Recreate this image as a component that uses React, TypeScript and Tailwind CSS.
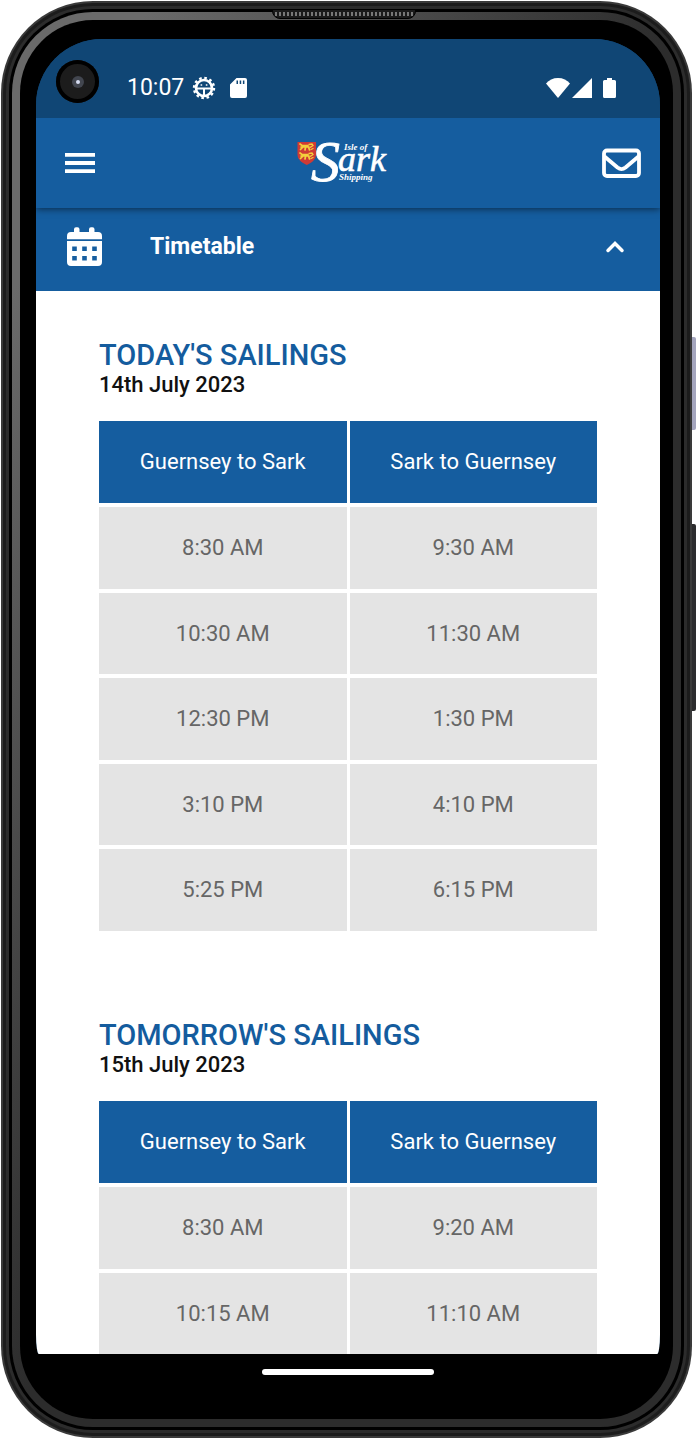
import React from 'react';

interface Sailing {
  out: string;
  back: string;
}

interface SailingsProps {
  title: string;
  date: string;
  rows: Sailing[];
}

const today: Sailing[] = [
  { out: '8:30 AM', back: '9:30 AM' },
  { out: '10:30 AM', back: '11:30 AM' },
  { out: '12:30 PM', back: '1:30 PM' },
  { out: '3:10 PM', back: '4:10 PM' },
  { out: '5:25 PM', back: '6:15 PM' },
];

const tomorrow: Sailing[] = [
  { out: '8:30 AM', back: '9:20 AM' },
  { out: '10:15 AM', back: '11:10 AM' },
];

const Sailings: React.FC<SailingsProps> = ({ title, date, rows }) => (
  <section>
    <h2 className="text-[29px] leading-8 font-medium text-[#145c9e]">{title}</h2>
    <p className="text-[22px] leading-7 font-medium text-[#111111]">{date}</p>
    <div className="-mx-[3px] mt-[18px]">
      <table className="w-full table-fixed border-separate border-spacing-x-[3px] border-spacing-y-1 text-[22px] leading-7">
        <thead>
          <tr className="h-[82px] text-white">
            <th scope="col" className="bg-[#155d9f] p-0 text-center font-normal">Guernsey to Sark</th>
            <th scope="col" className="bg-[#155d9f] p-0 text-center font-normal">Sark to Guernsey</th>
          </tr>
        </thead>
        <tbody>
          {rows.map(r => (
            <tr key={r.out} className="h-[81px] text-[#666666] odd:h-[82px]">
              <td className="bg-[#e4e4e4] p-0 text-center">{r.out}</td>
              <td className="bg-[#e4e4e4] p-0 text-center">{r.back}</td>
            </tr>
          ))}
        </tbody>
      </table>
    </div>
  </section>
);

const StatusBar = () => (
  <div className="relative z-20 flex h-[79px] shrink-0 items-center bg-[#104675] pt-[18px] pr-11 pl-[91px] text-white">
    <span className="text-[23px] leading-7">10:07</span>
    <svg className="ml-2 size-6" viewBox="0 0 24 24" fill="none" stroke="currentColor">
      <circle cx="12" cy="12" r="8" strokeWidth="2.6" />
      <circle cx="12" cy="12" r="10" strokeWidth="2.4" strokeDasharray="2.6 2.636" />
      <path d="M4 12.5h16M12 12.5v8" strokeWidth="2" />
      <path d="M8.6 9h1.6M13.8 9h1.6" strokeWidth="1.6" />
    </svg>
    <svg className="ml-[14px] h-5 w-[17px]" viewBox="0 0 17 20" fill="currentColor">
      <path fillRule="evenodd" d="M6.5 0H15a2 2 0 0 1 2 2v16a2 2 0 0 1-2 2H2a2 2 0 0 1-2-2V6.500zM6.500 2.500v3.500h1.500V2.500zm3.200 0v3.500h1.500V2.500zm3.200 0v3.500h1.500V2.500z" />
    </svg>
    <svg className="ml-auto h-5 w-6" viewBox="0 0 24 20" fill="currentColor">
      <path d="M12 20 0 5.500C3 2 7 0 12 0s9 2 12 5.500z" />
    </svg>
    <svg className="ml-[2px] size-5" viewBox="0 0 20 20" fill="currentColor">
      <path d="M20 0v20H0z" />
    </svg>
    <svg className="ml-[11px] h-5 w-[13px]" viewBox="0 0 13 20" fill="currentColor">
      <path d="M4 0h5v2h2.500A1.500 1.500 0 0 1 13 3.500v15a1.500 1.500 0 0 1-1.500 1.500h-10A1.500 1.500 0 0 1 0 18.500v-15A1.500 1.500 0 0 1 1.500 2H4z" />
    </svg>
  </div>
);

const Lion = ({ y }: { y: number }) => (
  <g transform={`translate(0 ${y})`} fill="none" stroke="#f4cf3c" strokeLinecap="round">
    <path d="M3 1l2 1.500h6M4 4h8M3.500 6.500l2-2M8 7l.5-2.500M12.500 7l-1-3" strokeWidth="1.700" />
    <path d="M13 4.500l3-2-1-1.500-3 .5M16 5.500l-2 1" strokeWidth="1.300" />
  </g>
);

const Logo = () => (
  <svg className="h-[72px] w-[104px]" viewBox="0 -8 104 72" role="img" aria-label="Isle of Sark Shipping" fontFamily="'Liberation Serif', serif" fontStyle="italic" fill="#ffffff">
    <path d="M.5 7h18.500v12.500c0 5-4 8-9.200 10.500C4.500 27.500.5 24.500.5 19.500z" fill="#cf3a35" />
    <Lion y={8} />
    <Lion y={17} />
    <text x="14" y="46" fontSize="58" stroke="#ffffff" strokeWidth="0.8">S</text>
    <text x="41" y="36" fontSize="36" stroke="#ffffff" strokeWidth="0.6">ark</text>
    <text x="47" y="15" fontSize="9" fontWeight="bold">Isle of</text>
    <text x="42" y="45" fontSize="9" fontWeight="bold">Shipping</text>
  </svg>
);

const AppBar = () => (
  <header className="relative z-10 flex h-[90px] shrink-0 items-center justify-between bg-[#155d9f] pr-[19px] pl-[29px] text-white shadow-[0_1px_7px_rgba(0,0,0,0.55)]">
    <button type="button" aria-label="Menu">
      <svg className="h-5 w-[30px]" viewBox="0 0 30 20" fill="currentColor">
        <path d="M0 0h30v3.800H0zM0 8.100h30v3.800H0zM0 16.200h30v3.800H0z" />
      </svg>
    </button>
    <Logo />
    <button type="button" aria-label="Messages">
      <svg className="h-[30px] w-[39px]" viewBox="0 0 39 30" fill="none" stroke="currentColor" strokeWidth="3.800" strokeLinejoin="round">
        <rect x="2" y="2.500" width="35" height="25.500" rx="3" />
        <path d="M2.500 8.500l13 11q4 3.200 8 0l13-11" />
      </svg>
    </button>
  </header>
);

const TimetableToggle = () => (
  <button type="button" aria-expanded="true" className="flex h-[83px] w-full shrink-0 items-center bg-[#155d9f] pr-[35px] pb-[6px] pl-[31px] text-white">
    <svg className="h-[39px] w-[35px]" viewBox="0 0 35 39" fill="currentColor">
      <path d="M7 5V2.200a2 2 0 0 1 2-2h1.500a2 2 0 0 1 2 2V5h9.500V2.200a2 2 0 0 1 2-2h1.500a2 2 0 0 1 2 2V5H31a4 4 0 0 1 4 4v3.200H0V9a4 4 0 0 1 4-4z" />
      <path fillRule="evenodd" d="M0 14h35v21a4 4 0 0 1-4 4H4a4 4 0 0 1-4-4zM5.200 19.500v4.500h4.600v-4.500zm10 0v4.500h4.600v-4.500zm10 0v4.500h4.600v-4.500zM5.200 29v4.500h4.600V29zm10 0v4.500h4.600V29zm10 0v4.500h4.600V29z" />
    </svg>
    <span className="ml-12 text-[23px] leading-7 font-bold">Timetable</span>
    <svg className="ml-auto h-3 w-5" viewBox="0 0 20 12" fill="none" stroke="currentColor" strokeWidth="3.500" strokeLinecap="round">
      <path d="M3 9.500l7-7 7 7" />
    </svg>
  </button>
);

export default function App() {
  return (
    <div className="relative h-screen overflow-hidden bg-white pt-px pr-[4px] pb-[2px] pl-px font-[Roboto,sans-serif]">
      {/* side keys */}
      <div className="absolute top-[337px] right-0 h-[93px] w-2 rounded-r-xs bg-[#a4a5bd]" />
      <div className="absolute top-[524px] right-0 h-[187px] w-2 rounded-r-xs bg-[#2c2c2e]" />

      {/* case, built from rings */}
      <div className="relative isolate h-full rounded-[92px] bg-[#3a3a3a] p-[2px]">
        <div className="h-full rounded-[90px] bg-[#1c1c1c] p-[3px]">
          <div className="h-full rounded-[87px] bg-[#2c2c2c] p-[3px]">
            <div className="h-full rounded-[84px] bg-black p-[3px]">
              <div className="h-full rounded-[81px] bg-linear-to-br from-[#6a6a6a] from-10% to-[#2c2c2c] to-50% p-2">
                <div className="flex h-full flex-col rounded-[73px] bg-black pt-[19px] pr-[13px] pl-4">
                  <div className="flex min-h-0 flex-1 flex-col overflow-hidden rounded-t-[66px] bg-[#104675] [border-bottom-left-radius:3px_20px] [border-bottom-right-radius:3px_20px]">
                    <StatusBar />
                    <AppBar />
                    <TimetableToggle />
                    <main className="flex min-h-0 flex-1 flex-col gap-[84px] overflow-hidden bg-white px-[63px] pt-12">
                      <Sailings title="TODAY'S SAILINGS" date="14th July 2023" rows={today} />
                      <Sailings title="TOMORROW'S SAILINGS" date="15th July 2023" rows={tomorrow} />
                    </main>
                  </div>
                  <div className="flex h-[65px] shrink-0 justify-center pt-[15px]">
                    <div className="h-[6px] w-[172px] rounded-full bg-white" />
                  </div>
                </div>
              </div>
            </div>
          </div>
        </div>
      </div>

      {/* earpiece and front camera */}
      <div className="absolute top-[9px] left-[272px] h-[10px] w-[144px] rounded-b-lg border border-black bg-[#1a1a1a] p-[2px]">
        <div className="h-full border-y-2 border-dotted border-[#777777]" />
      </div>
      <div className="absolute top-[60px] left-[56px] flex size-[43px] items-center justify-center rounded-full bg-[#1c1c1c] ring-4 ring-black ring-inset">
        <div className="flex size-3 items-center justify-center rounded-full bg-[#42464f]">
          <div className="size-1 rounded-full bg-[#d5dcf0]" />
        </div>
      </div>
    </div>
  );
}
